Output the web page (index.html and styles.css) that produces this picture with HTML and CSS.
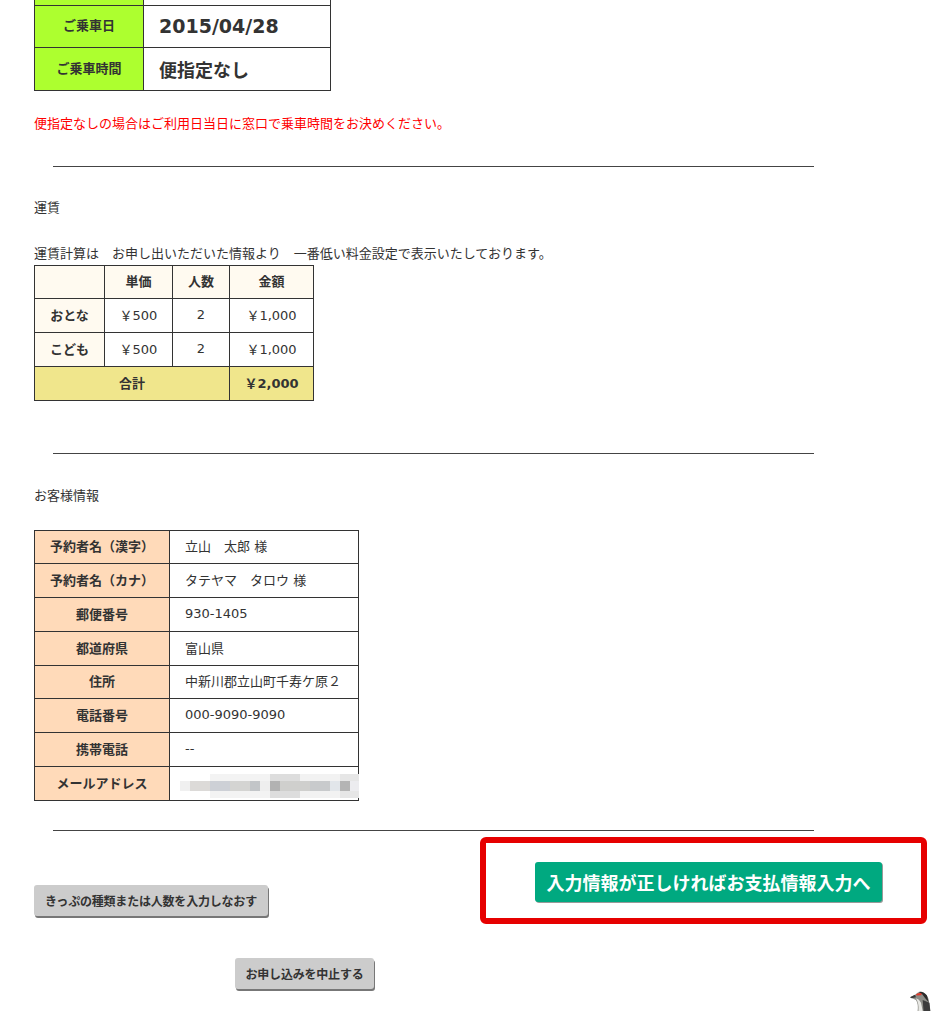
FILE: index.html
```html
<!DOCTYPE html>
<html lang="ja">
<head>
    <meta charset="UTF-8">
    <title>お申し込み内容の確認</title>
    <link rel="stylesheet" href="styles.css">
</head>
<body>
    <div class="page">

        <table class="ride-table">
            <tr><th></th><td></td></tr>
            <tr><th>ご乗車日</th><td><span class="ride-date">2015/04/28</span></td></tr>
            <tr><th>ご乗車時間</th><td><span class="ride-time">便指定なし</span></td></tr>
        </table>

        <p class="notice">便指定なしの場合はご利用日当日に窓口で乗車時間をお決めください。</p>
        <hr class="rule rule-first">

        <p class="section-title">運賃</p>
        <p class="fare-note">運賃計算は　お申し出いただいた情報より　一番低い料金設定で表示いたしております。</p>

        <table class="fare-table">
            <tr class="fare-head"><th></th><th>単価</th><th>人数</th><th>金額</th></tr>
            <tr><th class="fare-label">おとな</th><td>￥500</td><td>2</td><td>￥1,000</td></tr>
            <tr><th class="fare-label">こども</th><td>￥500</td><td>2</td><td>￥1,000</td></tr>
            <tr class="fare-total"><th colspan="3">合計</th><th>￥2,000</th></tr>
        </table>

        <hr class="rule rule-fare">

        <p class="section-title section-customer">お客様情報</p>

        <table class="customer-table">
            <tr><th>予約者名（漢字）</th><td>立山　太郎 様</td></tr>
            <tr><th>予約者名（カナ）</th><td>タテヤマ　タロウ 様</td></tr>
            <tr><th>郵便番号</th><td>930-1405</td></tr>
            <tr><th>都道府県</th><td>富山県</td></tr>
            <tr><th>住所</th><td>中新川郡立山町千寿ケ原２</td></tr>
            <tr><th>電話番号</th><td>000-9090-9090</td></tr>
            <tr><th>携帯電話</th><td>--</td></tr>
            <tr><th>メールアドレス</th><td class="mail-cell"><div class="mail-blur"></div></td></tr>
        </table>

        <hr class="rule rule-customer">

        <div class="action-row">
            <button class="btn btn-gray btn-redo">きっぷの種類または人数を入力しなおす</button>
            <button class="btn btn-green">入力情報が正しければお支払情報入力へ</button>
        </div>
        <button class="btn btn-gray btn-cancel">お申し込みを中止する</button>

        <!-- red annotation frame round the green button -->
        <div class="red-frame"></div>

        <svg class="bird" width="22" height="20" viewBox="0 0 26 22" preserveAspectRatio="none">
            <path d="M0 7 L6 4 Q10 0 15 1 Q20 3 22 9 L24 22 L9 22 Q10 14 7 10 Z" fill="#8d8d88"/>
            <path d="M0 7 L6 4 L7 7 L2 8 Z" fill="#3a3a3a"/>
            <path d="M7 3.6 Q11 1.4 15 2.5 L13 4.6 L8 5 Z" fill="#e0392a"/>
            <path d="M10 1 Q16 0 20 5 L22 12 L18 8 L14 3 Z" fill="#2b2b2b"/>
            <path d="M7 8 Q11 9 13 13 L15 22 L10 22 Q11 14 7 8 Z" fill="#e8e8e4"/>
            <path d="M15 10 L23 13 L24 22 L16 22 Z" fill="#3c3c3c"/>
        </svg>
    </div>
</body>
</html>
```

FILE: styles.css
```css
html, body {
    margin: 0;
    padding: 0;
    background-color: #fff;
}
body {
    font-family: "DejaVu Sans", "Noto Sans CJK JP", sans-serif;
    font-size: 13px;
    color: #333;
}
.page {
    position: relative;
    height: 1011px;
    overflow: hidden;
    padding-left: 34px;
    box-sizing: border-box;
}
table {
    border-collapse: collapse;
    table-layout: fixed;
}
th, td {
    border: 1px solid #333;
    padding: 0;
    font-size: 13px;
}
p {
    margin: 0;
    line-height: 20px;
}

/* ride table, top row is cut off by the window */
.ride-table {
    width: 297px;
    margin-top: -38px;
}
.ride-table tr {
    height: 42.5px;
}
.ride-table th {
    width: 108px;
    padding-bottom: 3px;
    background-color: #adff2f;
}
.ride-table td {
    padding-left: 15px;
    font-weight: bold;
}
.ride-date {
    font-size: 19px;
}
.ride-time {
    font-size: 18px;
}

.notice {
    margin-top: 23px;
    color: #f00;
}
.rule {
    width: 761px;
    height: 1px;
    margin: 0 0 0 19px;
    padding: 0;
    border: none;
    background-color: #444;
}
.rule-first {
    margin-top: 32px;
}
.section-title {
    margin-top: 31px;
}
.fare-note {
    margin-top: 26px;
}

/* fare table */
.fare-table {
    width: 280px;
    margin-top: 1px;
}
.fare-table tr {
    height: 33.75px;
}
.fare-table th, .fare-table td {
    padding-bottom: 2px;
}
.fare-table th:nth-child(1) { width: 69px; }
.fare-table th:nth-child(2) { width: 67px; }
.fare-table th:nth-child(3) { width: 56px; }
.fare-table th:nth-child(4) { width: 83px; }
.fare-table td {
    text-align: center;
}
.fare-head th, .fare-label {
    background-color: #fffaf0;
}
.fare-total th {
    background-color: #f0e68c;
}
.rule-fare {
    margin-top: 52px;
}
.section-customer {
    margin-top: 32px;
}

/* customer table */
.customer-table {
    width: 325px;
    margin-top: 24px;
}
.customer-table tr {
    height: 33.75px;
}
.customer-table th, .customer-table td {
    padding-bottom: 2px;
}
.customer-table th {
    width: 134px;
    background-color: #ffdab9;
}
.customer-table td {
    padding-left: 15px;
}
.mail-cell {
    position: relative;
}
.mail-blur {
    position: absolute;
    left: 10px;
    top: 7px;
    width: 179px;
    height: 24px;
    background:
        linear-gradient(90deg, #f0f0f0 0 10px, #dcdad8 10px 30px, #cdd0d6 30px 50px, #d4d4d2 50px 70px, #c2c5c8 70px 80px, #eee 80px 90px, #b2b2b2 90px 100px, #cfcfcd 100px 130px, #c8cacc 130px 150px, #e2e6ea 150px 160px, #b4b4b4 160px 170px, #ececef 170px 179px) 0 7px / 179px 10px no-repeat,
        linear-gradient(90deg, #fff 0 30px, #f3f3f3 30px 90px, #ddd 90px 120px, #f2f2f2 120px 160px, #e6e6e6 160px 179px);
}
.rule-customer {
    margin-top: 29px;
}

/* buttons */
.btn {
    display: block;
    font-family: inherit;
    font-weight: bold;
    padding: 0;
    border: none;
    border-radius: 3px;
    cursor: pointer;
}
.btn-gray {
    height: 31px;
    font-size: 12px;
    letter-spacing: -0.2px;
    color: #333;
    background-color: #ccc;
    box-shadow: 1px 2px 0 #777;
}
.action-row {
    display: flex;
    align-items: flex-start;
    margin-top: 31px;
}
.btn-redo {
    width: 234px;
    margin-top: 23px;
}
.btn-green {
    width: 347px;
    height: 40px;
    margin-left: 267px;
    font-size: 18px;
    color: #fff;
    background-color: #00a980;
    box-shadow: 1px 1px 0 #999;
}
.btn-cancel {
    width: 139px;
    margin: 42px 0 0 201px;
}
.red-frame {
    position: absolute;
    left: 480px;
    top: 837px;
    width: 447px;
    height: 87px;
    box-sizing: border-box;
    border: 6px solid #e60000;
    border-radius: 6px;
}
.bird {
    position: absolute;
    left: 910px;
    top: 991px;
}
```
